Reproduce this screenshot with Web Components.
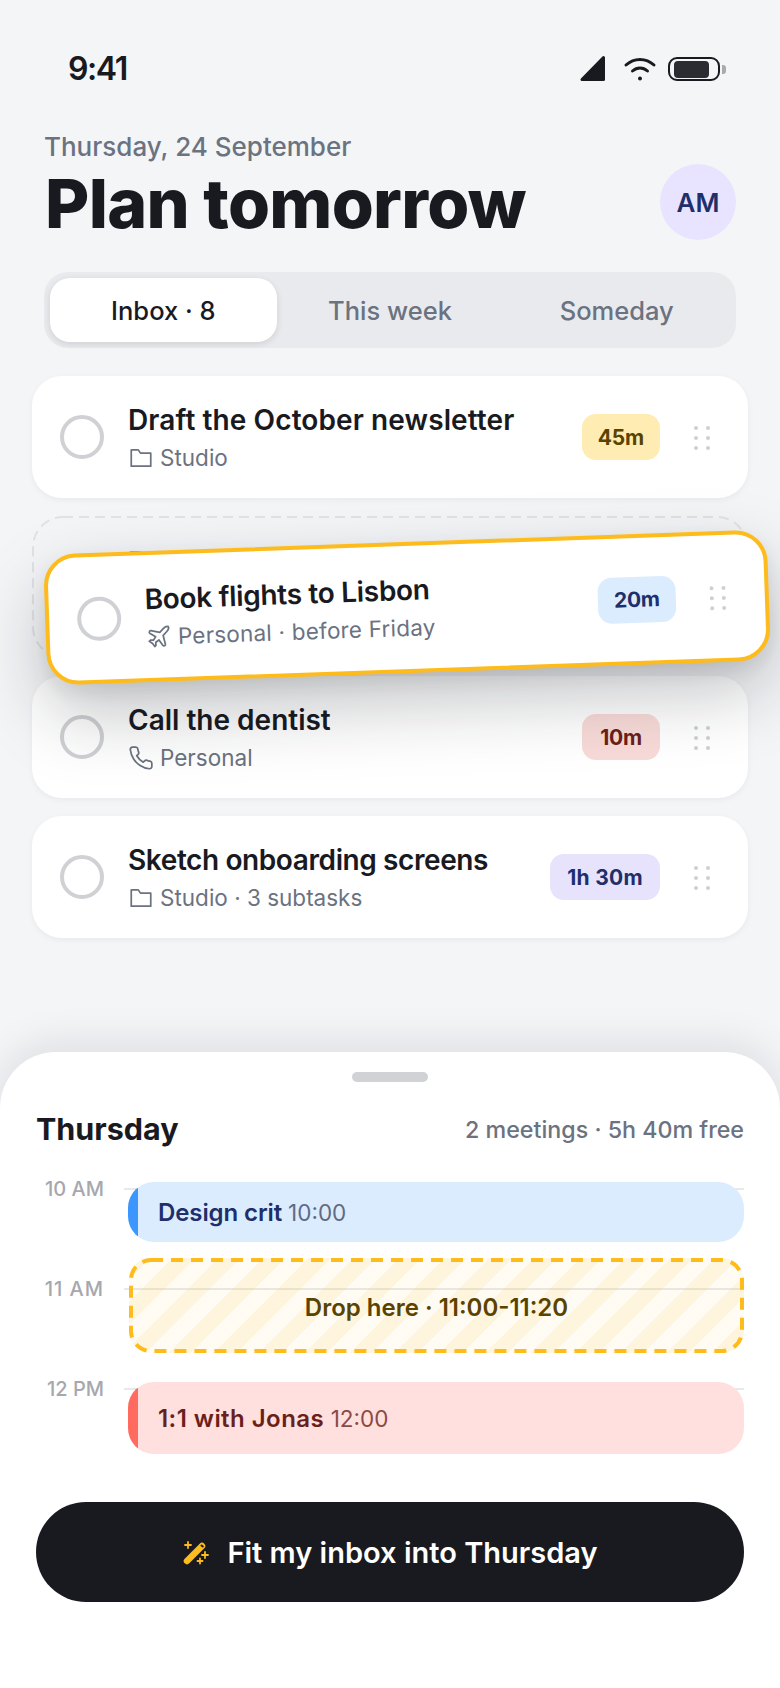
<!doctype html>
<html lang="en">
<head>
<meta charset="utf-8">
<title>Plan tomorrow</title>
<style>
  html, body { margin: 0; background: #f4f5f7; }
  body { font-family: Inter, "Liberation Sans", sans-serif; color: #191a1f; }
</style>
</head>
<body>
<plan-app>
  <status-bar></status-bar>
  <plan-header date="Thursday, 24 September" initials="AM">Plan tomorrow</plan-header>
  <tab-switch>
    <tab-item active>Inbox · 8</tab-item>
    <tab-item>This week</tab-item>
    <tab-item>Someday</tab-item>
  </tab-switch>
  <task-list>
    <task-card tone="amber" dur="45m" icon="folder" style="letter-spacing:.1px">Draft the October newsletter<span slot="meta">Studio</span></task-card>
    <drag-slot>
      <task-card ghost tone="blue" dur="20m" icon="plane">Book flights to Lisbon<span slot="meta">Personal · before Friday</span></task-card>
      <task-card slot="lifted" lifted tone="blue" dur="20m" icon="plane" style="letter-spacing:-.3px">Book flights to Lisbon<span slot="meta" style="letter-spacing:.2px">Personal · before Friday</span></task-card>
    </drag-slot>
    <task-card tone="red" dur="10m" icon="phone">Call the dentist<span slot="meta">Personal</span></task-card>
    <task-card tone="violet" dur="1h 30m" icon="folder" style="letter-spacing:-.4px;--dur-pad:17px;--dur-ls:.3px">Sketch onboarding screens<span slot="meta" style="letter-spacing:0">Studio · 3 subtasks</span></task-card>
  </task-list>
  <day-sheet heading="Thursday" summary="2 meetings · 5h 40m free">
    <time-grid>
      <hour-row slot="hours">10 AM</hour-row>
      <hour-row slot="hours" style="letter-spacing:1px">11 AM</hour-row>
      <hour-row slot="hours">12 PM</hour-row>
      <cal-event tone="blue" time="10:00" style="letter-spacing:-.1px">Design crit</cal-event>
      <drop-zone>Drop here · 11:00-11:20</drop-zone>
      <cal-event tone="red" time="12:00" tall style="letter-spacing:.45px">1:1 with Jonas</cal-event>
    </time-grid>
    <fit-button>Fit my inbox into Thursday</fit-button>
  </day-sheet>
</plan-app>

<script>
  const ICONS = {
    folder: '<path d="M3 19.500V4.500h6.500l2 3H21v12Z"/>',
    phone: '<path d="M22 16.920v3a2 2 0 0 1-2.180 2 19.790 19.790 0 0 1-8.630-3.070 19.500 19.500 0 0 1-6-6 19.790 19.790 0 0 1-3.070-8.670A2 2 0 0 1 4.110 2h3a2 2 0 0 1 2 1.720 12.840 12.840 0 0 0 .7 2.810 2 2 0 0 1-.45 2.110L8.090 9.910a16 16 0 0 0 6 6l1.270-1.270a2 2 0 0 1 2.110-.45 12.840 12.840 0 0 0 2.810.7A2 2 0 0 1 22 16.920z"/>',
    plane: '<path d="M17.800 19.200 16 11l3.500-3.500C21 6 21.500 4 21 3c-1-.5-3 0-4.500 1.500L13 8 4.800 6.200c-.5-.1-.9.1-1.100.5l-.3.5c-.2.5-.1 1 .3 1.300L9 12l-2 3H4l-1 1 3 2 2 3 1-1v-3l3-2 3.500 5.300c.3.4.8.5 1.300.3l.5-.2c.4-.3.6-.7.5-1.200z"/>'
  };

  // Small helper: every element here is only a shadow root with fixed markup.
  function define(name, render) {
    customElements.define(name, class extends HTMLElement {
      connectedCallback() {
        if (this.shadowRoot) return;
        this.attachShadow({ mode: "open" }).innerHTML = render(this);
      }
    });
  }

  define("plan-app", () => `
    <style>
      :host { display: flex; flex-direction: column; width: 780px; height: 1688px; overflow: hidden; background: #f4f5f7; }
    </style>
    <slot></slot>`);

  define("status-bar", () => `
    <style>
      :host { display: flex; align-items: center; justify-content: space-between; height: 40px; padding: 48px 54px 42px 68px; }
      .time { font-size: 32px; font-weight: 600; letter-spacing: -.045em; line-height: 40px; padding-top: 2px; }
      .icons { display: flex; align-items: center; margin-top: 2px; }
      .signal { margin: -2px 14px 0 0; }
      .wifi { margin-right: 11px; }
      svg { display: block; }
    </style>
    <span class="time">9:41</span>
    <div class="icons">
      <svg class="signal" width="32" height="30" viewBox="0 0 32 30"><path d="M5 26.500 26.500 4.500V26.500Z" fill="#191a1f" stroke="#191a1f" stroke-width="3" stroke-linejoin="round"/></svg>
      <svg class="wifi" width="34" height="28" viewBox="0 0 34 28" fill="none" stroke="#191a1f" stroke-width="3" stroke-linecap="round"><path d="M3 10C11 2.500 23 2.500 31 10"/><path d="M9.500 16C14 12 20 12 24.500 16"/><circle cx="17" cy="23.500" r="2" fill="#191a1f" stroke="none"/></svg>
      <battery-icon></battery-icon>
    </div>`);

  define("battery-icon", () => `
    <style>
      :host { display: flex; align-items: center; gap: 2px; }
      .shell { box-sizing: border-box; width: 52px; height: 24px; border: 2.500px solid #191a1f; border-radius: 9px; padding: 1.500px 9.500px 1.500px 3.500px; }
      .fill { height: 100%; background: #2b2c31; border-radius: 4px; }
      .nub { width: 4px; height: 9px; background: #a9aaae; border-radius: 0 3px 3px 0; }
    </style>
    <div class="shell"><div class="fill"></div></div><div class="nub"></div>`);

  define("plan-header", (el) => `
    <style>
      :host { display: flex; align-items: flex-end; justify-content: space-between; padding: 0 44px 0 44px; }
      .date { font-size: 26px; line-height: 34px; font-weight: 500; color: #6b7280; }
      h1 { margin: 2px 0 0 1px; font-size: 68px; line-height: 74px; font-weight: 800; letter-spacing: -.01em; color: #191a1f; }
      .avatar { width: 76px; height: 76px; border-radius: 50%; background: #e8e4ff; color: #1e2f6b; display: grid; place-items: center; font-size: 26px; font-weight: 600; }
    </style>
    <div><div class="date">${el.getAttribute("date")}</div><h1><slot></slot></h1></div>
    <div class="avatar">${el.getAttribute("initials")}</div>`);

  define("tab-switch", () => `
    <style>
      :host { display: grid; grid-template-columns: repeat(3, 1fr); margin: 32px 44px 28px; padding: 6px; height: 64px; background: #e9eaed; border-radius: 24px; }
    </style>
    <slot></slot>`);

  define("tab-item", () => `
    <style>
      :host { display: grid; place-items: center; font-size: 25.500px; font-weight: 500; color: #6b7280; border-radius: 20px; }
      :host([active]) { background: #fff; color: #191a1f; box-shadow: 0 2px 6px rgba(20, 22, 30, .12); }
    </style>
    <slot></slot>`);

  define("task-list", () => `
    <style>
      :host { display: flex; flex-direction: column; gap: 18px; padding: 0 32px; }
    </style>
    <slot></slot>`);

  const BADGES = {
    amber: "background:#feecb3;color:#5a4300",
    blue: "background:#dcecff;color:#1e2f6b",
    red: "background:#f8dbd8;color:#6b1f1a",
    violet: "background:#e7e3fd;color:#1e2f6b"
  };

  define("task-card", (el) => `
    <style>
      :host { display: flex; align-items: center; box-sizing: border-box; height: 122px; padding: 0 38px 0 28px; background: #fff; border-radius: 30px; box-shadow: 0 2px 6px rgba(20, 22, 30, .05); }
      :host([ghost]) { background: transparent; box-shadow: none; opacity: .4; padding-top: 4px; }
      :host([lifted]) { position: absolute; left: 13px; top: 26px; width: 724px; height: 131px; padding: 0 39px 0 28px; border: 4px solid #fdbb1c; border-radius: 32px; transform: rotate(-2deg); box-shadow: 0 30px 70px rgba(20, 22, 30, .25), 0 8px 18px rgba(20, 22, 30, .08); }
      .check { flex: none; box-sizing: border-box; width: 44px; height: 44px; border: 4px solid #d0d1d4; border-radius: 50%; }
      .body { flex: 1; min-width: 0; margin-left: 24px; }
      .title { font-size: 28px; line-height: 36px; font-weight: 600; color: #191a1f; }
      .meta { display: flex; align-items: center; gap: 6px; margin-top: 5px; font-size: 22.500px; line-height: 30px; color: #6b7280; letter-spacing: 0; }
      svg.ic { flex: none; width: 26px; height: 26px; fill: none; stroke: #6b7280; stroke-width: 1.600; stroke-linejoin: round; stroke-linecap: round; }
      .dur { flex: none; box-sizing: border-box; min-width: 78px; height: 46px; padding: 0 var(--dur-pad, 16px); border-radius: 14px; display: grid; place-items: center; font-size: 21px; font-weight: 700; letter-spacing: var(--dur-ls, -.01em); }
      .grip { flex: none; margin: 2px 0 0 34px; display: grid; grid-template-columns: 4px 4px; gap: 6px 8px; }
      .grip i { width: 4px; height: 4px; border-radius: 50%; background: #cfd0d4; }
    </style>
    <div class="check"></div>
    <div class="body">
      <div class="title"><slot></slot></div>
      <div class="meta"><svg class="ic" viewBox="0 0 24 24">${ICONS[el.getAttribute("icon")]}</svg><slot name="meta"></slot></div>
    </div>
    <div class="dur" style="${BADGES[el.getAttribute("tone")]}">${el.getAttribute("dur")}</div>
    <div class="grip"><i></i><i></i><i></i><i></i><i></i><i></i></div>`);

  define("drag-slot", () => `
    <style>
      :host { display: block; position: relative; z-index: 2; height: 142px; }
      svg { position: absolute; inset: 0; width: 100%; height: 100%; }
    </style>
    <svg viewBox="0 0 716 142" fill="none"><rect x="1" y="1" width="714" height="140" rx="30" stroke="#e1e2e5" stroke-width="2" stroke-dasharray="10 6"/></svg>
    <slot></slot><slot name="lifted"></slot>`);

  define("day-sheet", (el) => `
    <style>
      :host { display: block; flex: 1; margin-top: 114px; padding: 20px 36px 0; background: #fff; border-radius: 56px 56px 0 0; box-shadow: 0 -8px 40px rgba(20, 22, 30, .1); position: relative; z-index: 1; }
      .handle { width: 76px; height: 10px; margin: 0 auto; border-radius: 5px; background: #d1d2d5; }
      .head { display: flex; align-items: center; justify-content: space-between; height: 40px; margin: 26px 0 26px; }
      .head b { font-size: 30.500px; font-weight: 700; margin-top: 1px; }
      .head span { font-size: 23.250px; font-weight: 500; color: #6b7280; margin-top: 3px; }
    </style>
    <div class="handle"></div>
    <div class="head"><b>${el.getAttribute("heading")}</b><span>${el.getAttribute("summary")}</span></div>
    <slot></slot>`);

  define("time-grid", () => `
    <style>
      :host { display: grid; }
      .hours, .events { grid-area: 1 / 1; display: flex; flex-direction: column; }
      .hours { padding-top: 1px; }
      .events { padding: 8px 0 0 92px; gap: 16px; }
    </style>
    <div class="hours"><slot name="hours"></slot></div>
    <div class="events"><slot></slot></div>`);

  define("hour-row", () => `
    <style>
      :host { display: flex; align-items: center; height: 28px; margin-bottom: 72px; }
      .label { width: 68px; text-align: right; font-size: 20px; font-weight: 500; color: #a6a8ae; }
      .line { flex: 1; height: 2px; margin-left: 20px; background: #e8e9eb; }
    </style>
    <div class="label"><slot></slot></div><div class="line"></div>`);

  const EVENTS = {
    blue: { bg: "#dcecff", bar: "#3b96ff", fg: "#1e2f6b", time: "#5f6b85" },
    red: { bg: "#ffe0de", bar: "#ff6b5e", fg: "#6b1f1a", time: "#8a4a46" }
  };

  define("cal-event", (el) => {
    const c = EVENTS[el.getAttribute("tone")];
    return `
    <style>
      :host { display: flex; align-items: center; height: 60px; overflow: hidden; border-radius: 26px; background: ${c.bg}; }
      :host([tall]) { height: 72px; margin-top: 13px; }
      .bar { align-self: stretch; width: 10px; background: ${c.bar}; }
      .text { margin-left: 20px; font-size: 24px; font-weight: 600; color: ${c.fg}; }
      .text span { font-size: 22.500px; font-weight: 400; color: ${c.time}; letter-spacing: 0; }
    </style>
    <div class="bar"></div>
    <div class="text"><slot></slot> <span>${el.getAttribute("time")}</span></div>`;
  });

  define("drop-zone", () => `
    <style>
      :host { display: flex; align-items: center; justify-content: center; position: relative; box-sizing: border-box; height: 95px; margin-left: 1px; padding: 8px 4px 4px; font-size: 24px; font-weight: 600; color: #5a4300;
        border-radius: 22px; background: repeating-linear-gradient(135deg, rgba(253, 187, 28, .15) 0 15px, rgba(253, 187, 28, .05) 15px 31px, rgba(253, 187, 28, .15) 31px 32px); }
      svg { position: absolute; inset: 0; width: 100%; height: 100%; }
    </style>
    <svg viewBox="0 0 615 95" fill="none"><rect x="2" y="2" width="611" height="91" rx="20" stroke="#fdbb1c" stroke-width="4" stroke-dasharray="12 8"/></svg>
    <slot></slot>`);

  define("fit-button", () => `
    <style>
      :host { display: flex; align-items: center; justify-content: center; gap: 17px; box-sizing: border-box; height: 100px; margin-top: 27px; padding-top: 1px; border-radius: 50px; background: #191a1f; color: #fff; font-size: 29px; font-weight: 600; }
      svg { display: block; }
    </style>
    <svg width="28" height="28" viewBox="0 0 28 28" fill="none" stroke-linecap="round">
      <path d="M5 22 20 7" stroke="#fdbb1c" stroke-width="6.500"/>
      <path d="M19.500 6.500 20.800 7.500" stroke="#191a1f" stroke-width="2"/>
      <path d="M6 3v6M3 6h6M23 13v6M20 16h6M18 19.500v5M15.500 22h5" stroke="#fdbb1c" stroke-width="1.800"/>
    </svg>
    <slot></slot>`);
</script>
</body>
</html>
